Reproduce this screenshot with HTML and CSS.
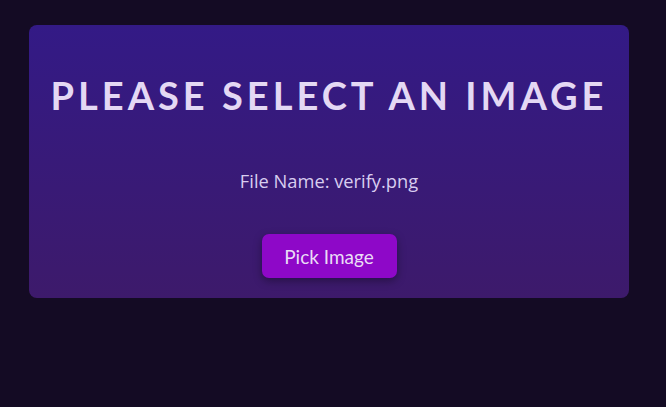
FILE: index.html
```html
<!DOCTYPE html>
<html>
<head>
<meta charset="utf-8">
<link rel="stylesheet" href="styles.css">
</head>
<body>
<div class="page">
  <div class="card">
    <h1 class="title">PLEASE SELECT AN IMAGE</h1>
    <p class="file">File Name: verify.png</p>
    <button class="pick">Pick Image</button>
  </div>
</div>
</body>
</html>
```
FILE: styles.css
```css
html, body {
  margin: 0;
  padding: 0;
  background: #140b24;
  height: 100%;
}
.page {
  padding: 25px 0 0 29px;
}
.card {
  width: 600px;
  height: 273px;
  box-sizing: border-box;
  border-radius: 8px;
  background: linear-gradient(to bottom, #331a86, #3d1a6b);
  display: flex;
  flex-direction: column;
  align-items: center;
  padding-top: 46px;
}
.title {
  margin: 0;
  font-family: Lato, sans-serif;
  font-weight: 700;
  font-size: 38px;
  letter-spacing: 4px;
  color: #e4d8f4;
  line-height: 48px;
  padding-left: 0;
}
.file {
  margin: 50px 0 0;
  font-family: "Open Sans", sans-serif;
  font-size: 18.3px;
  color: #d8cdf0;
  line-height: 24px;
}
.pick {
  margin-top: 41px;
  width: 135px;
  height: 44px;
  border: none;
  border-radius: 7px;
  background: #8e08c8;
  color: #eadcf6;
  font-family: Lato, sans-serif;
  font-size: 19px;
  box-shadow: 0 3px 8px rgba(0,0,0,0.35);
}
```
